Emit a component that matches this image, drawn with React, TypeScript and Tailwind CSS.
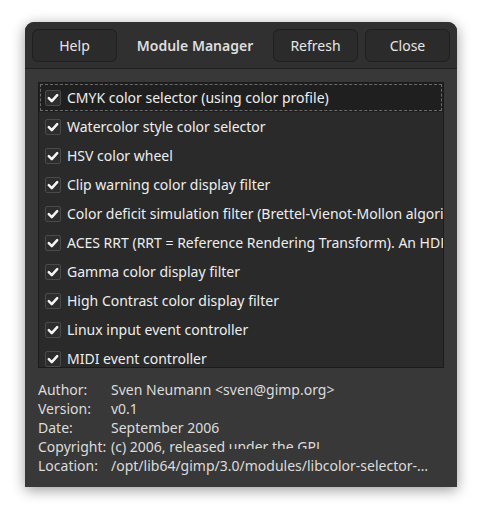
import React from "react";

const modules = [
  "CMYK color selector (using color profile)",
  "Watercolor style color selector",
  "HSV color wheel",
  "Clip warning color display filter",
  "Color deficit simulation filter (Brettel-Vienot-Mollon algorithm)",
  "ACES RRT (RRT = Reference Rendering Transform). An HDR to SDR proof color display filter",
  "Gamma color display filter",
  "High Contrast color display filter",
  "Linux input event controller",
  "MIDI event controller",
];

const font = { fontFamily: '"Noto Sans", "Open Sans", sans-serif' };

function Check() {
  return (
    <span className="flex h-[16px] w-[16px] shrink-0 items-center justify-center rounded-[2px] border border-[#4a4a4a] bg-[#2d2d2d]">
      <svg width="12" height="12" viewBox="0 0 12 12">
        <path d="M1.8 6.2 L4.8 9.1 L10.2 3.1" fill="none" stroke="#f6f6f6" strokeWidth="2.5" strokeLinecap="round" strokeLinejoin="round" />
      </svg>
    </span>
  );
}

function HeaderButton({ label }: { label: string }) {
  return (
    <button
      type="button"
      className="h-[33px] w-[85px] shrink-0 rounded-[6px] border border-[#1f1f1f] bg-[#2b2b2b] text-[14px] text-[#e6e6e6]"
    >
      {label}
    </button>
  );
}

export default function App() {
  return (
    <div className="h-[516px] w-[482px] bg-white pl-[25px] pt-[22px]" style={font}>
      <div className="flex h-[465px] w-[432px] flex-col overflow-hidden rounded-t-[9px] bg-[#383838] shadow-[0_3px_14px_rgba(0,0,0,0.4)]">
        <div className="flex h-[47px] shrink-0 items-center gap-[7px] border-b border-[#1f1f1f] bg-[#303030] px-[7px]">
          <HeaderButton label="Help" />
          <div className="flex-1 text-center text-[14px] font-semibold text-[#dedede]">Module Manager</div>
          <HeaderButton label="Refresh" />
          <HeaderButton label="Close" />
        </div>

        <div className="flex flex-col px-[13px] pt-[13px]">
          <div className="h-[286px] w-[406px] overflow-hidden border border-[#1b1b1b] bg-[#2a2a2a]">
            {modules.map((name, i) => (
              <div
                key={name}
                className={
                  "flex h-[29px] items-center gap-[6px] pl-[6px] " +
                  (i === 0 ? "bg-[#1f1f1f] outline-1 outline-offset-[-2px] outline-dashed outline-[#6a6a6a]" : "")
                }
              >
                <Check />
                <span className="whitespace-nowrap text-[14px] text-[#eeeeee]">{name}</span>
              </div>
            ))}
          </div>

          <div className="mt-[12px] grid grid-cols-[73px_1fr] text-[14px] leading-[19px] text-[#dcdcdc]">
            <span>Author:</span>
            <span>Sven Neumann &lt;sven@gimp.org&gt;</span>
            <span>Version:</span>
            <span>v0.1</span>
            <span>Date:</span>
            <span>September 2006</span>
            <span>Copyright:</span>
            <span className="flex items-start whitespace-pre">
              <span>(c) 2006, released </span>
              <span className="inline-block h-[12px] overflow-hidden">under the GPL</span>
            </span>
            <span>Location:</span>
            <span className="truncate pr-[12px]">/opt/lib64/gimp/3.0/modules/libcolor-selector-cmyk.so</span>
          </div>
        </div>
      </div>
    </div>
  );
}
